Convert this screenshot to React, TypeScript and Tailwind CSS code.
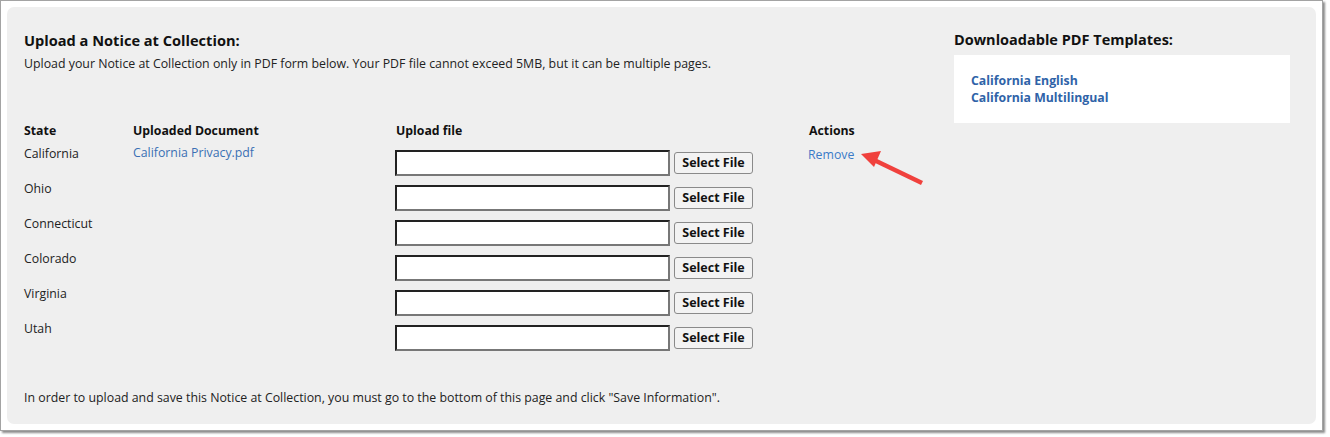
const states = ['California', 'Ohio', 'Connecticut', 'Colorado', 'Virginia', 'Utah'];

function FileRow({ state, doc, action }: { state: string; doc?: string; action?: string }) {
  return (
    <div className="flex h-[35px] items-start">
      <div className="w-[109px] leading-[18px] pt-[1px] text-[12.3px] text-[#222]">{state}</div>
      <div className="w-[262px] leading-[16px] pt-[1px] text-[12.3px] text-[#3a6fb4]">{doc}</div>
      <div className="w-[413px] mt-[6px] flex items-center">
        <div className="w-[275px] h-[26px] bg-white border-2 border-t-[#222] border-l-[#222] border-b-[#777] border-r-[#777]" />
        <button className="ml-[4px] h-[22px] w-[79px] rounded-[3px] border border-[#8a8a8a] bg-[#f3f3f3] text-[12.5px] font-bold text-[#111] leading-none">
          Select File
        </button>
      </div>
      <div className="leading-[18px] pt-[2px] text-[12.3px] text-[#3b7bc8]">{action}</div>
    </div>
  );
}

export default function App() {
  return (
    <div className="w-[1330px] h-[437px] bg-white font-['Open_Sans',sans-serif] relative">
      <div className="w-[1323px] h-[431px] border border-[#a3a3a3] shadow-[2px_2px_2px_rgba(0,0,0,0.45)] bg-white p-[6px]">
        <div className="h-full rounded-[7px] bg-[#efefef] flex">
          <div className="w-[940px] pl-[17px] pt-[23px] flex flex-col">
            <h2 className="text-[14.6px] font-bold leading-[20px] text-[#111]">Upload a Notice at Collection:</h2>
            <p className="mt-[5px] text-[12.35px] leading-[18px] text-[#222]">
              Upload your Notice at Collection only in PDF form below. Your PDF file cannot exceed 5MB, but it can be multiple pages.
            </p>
            <div className="mt-[48px] flex h-[18px] items-center pt-[2px] text-[12.3px] font-bold text-[#111]">
              <div className="w-[109px]">State</div>
              <div className="w-[263px]">Uploaded Document</div>
              <div className="w-[413px]">Upload file</div>
              <div>Actions</div>
            </div>
            <div className="mt-[5px]">
              {states.map((s, i) => (
                <FileRow
                  key={s}
                  state={s}
                  doc={i === 0 ? 'California Privacy.pdf' : undefined}
                  action={i === 0 ? 'Remove' : undefined}
                />
              ))}
            </div>
            <p className="mt-[35px] text-[12.35px] leading-[18px] text-[#222]">
              In order to upload and save this Notice at Collection, you must go to the bottom of this page and click "Save Information".
            </p>
          </div>
          <div className="pt-[23px] pl-[7px]">
            <h2 className="text-[14.5px] font-bold leading-[20px] text-[#111]">Downloadable PDF Templates:</h2>
            <div className="mt-[5px] w-[336px] h-[68px] bg-white pl-[17px] pt-[17px] text-[12.3px] font-bold leading-[17px] text-[#2f63a8]">
              <div>California English</div>
              <div>California Multilingual</div>
            </div>
          </div>
        </div>
      </div>
      <svg className="absolute left-[855px] top-[145px]" width="80" height="45" viewBox="0 0 80 45">
        <line x1="67" y1="38" x2="17" y2="14" stroke="#f0413d" strokeWidth="4.5" strokeLinecap="butt" />
        <polygon points="6,9 26,6 19,22" fill="#f0413d" />
      </svg>
    </div>
  );
}
